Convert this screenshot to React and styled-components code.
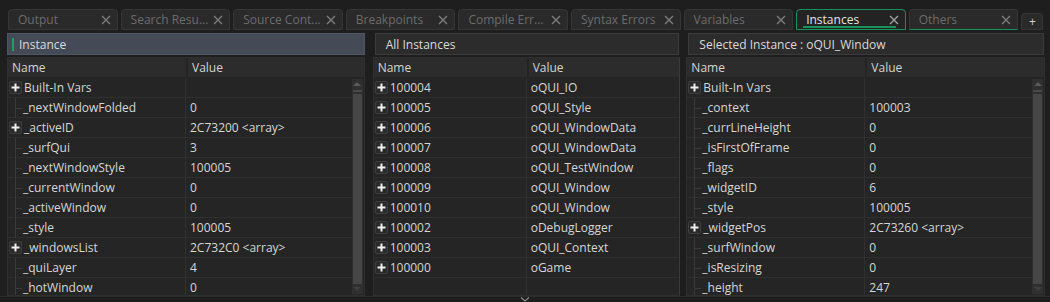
import React from "react";
import styled, { createGlobalStyle } from "styled-components";

const Global = createGlobalStyle`
  html, body { margin: 0; padding: 0; background: #1e1e1e; }
  body { font-family: "Open Sans", "DejaVu Sans", sans-serif; font-size: 12px; }
`;

const Screen = styled.div`
  width: 1050px;
  height: 302px;
  background: #1e1e1e;
  overflow: hidden;
  display: flex;
  flex-direction: column;
`;

const TabBar = styled.div`
  display: flex;
  align-items: flex-end;
  gap: 3px;
  height: 21px;
  flex-shrink: 0;
  padding: 9px 0 0 8px;
`;

const Tab = styled.div`
  position: relative;
  box-sizing: border-box;
  width: ${(p) => (p.$small ? "22px" : "109.6px")};
  height: ${(p) => (p.$small ? "17px" : "21px")};
  display: flex;
  align-items: center;
  justify-content: ${(p) => (p.$small ? "center" : "space-between")};
  padding: ${(p) => (p.$small ? "0" : "0 6px 0 9px")};
  background: ${(p) => (p.$active ? "#232323" : "#2a2a2a")};
  border: 1px solid ${(p) => (p.$active ? "#17915a" : "#363636")};
  border-bottom-color: ${(p) => (p.$active || p.$green ? "#17915a" : "#363636")};
  border-radius: 4px 4px 0 0;
  color: ${(p) => (p.$active ? "#e2e2e2" : p.$small ? "#d0d0d0" : "#6c6c6c")};
  white-space: nowrap;
  font-size: 12px;
  &::after {
    content: "";
    display: ${(p) => (p.$active ? "block" : "none")};
    position: absolute;
    left: 6px;
    right: 9px;
    bottom: 1px;
    height: 2px;
    background: #17915a;
  }
`;

const Panels = styled.div`
  display: flex;
  padding: 3px 5px 0 7px;
  flex: 1;
  min-height: 0;
`;

const Panel = styled.div`
  width: ${(p) => p.$w}px;
  margin-right: ${(p) => p.$gap || 0}px;
  display: flex;
  flex-direction: column;
  min-height: 0;
`;

const Header = styled.div`
  box-sizing: border-box;
  height: 22px;
  flex-shrink: 0;
  display: flex;
  align-items: center;
  gap: 5px;
  padding-left: ${(p) => (p.$selected ? "4px" : "10px")};
  margin: ${(p) => (p.$selected ? "0" : "0 1px 0 2px")};
  background: ${(p) => (p.$selected ? "#444b57" : "#2c2c2c")};
  border: 1px solid ${(p) => (p.$selected ? "#4f5663" : "#3b3b3b")};
  color: #dadada;
  font-size: 12px;
`;

const Marker = styled.span`
  width: 2px;
  height: 13px;
  background: #16a365;
`;

const Table = styled.div`
  margin-top: 2px;
  flex: 1;
  min-height: 0;
  background: #252525;
  border: 1px solid #2f2f2f;
  border-right-color: ${(p) => (p.$edge ? "#3a3a3a" : "#2f2f2f")};
  display: flex;
  flex-direction: column;
  overflow: hidden;
`;

const ColHead = styled.div`
  display: grid;
  grid-template-columns: ${(p) => p.$name}px 1fr;
  height: 19px;
  flex-shrink: 0;
  background: #2c2c2c;
  border-bottom: 1px solid #242424;
  color: #d4d4d4;
  font-size: 12px;
  span {
    display: flex;
    align-items: center;
    padding-left: 4px;
  }
  span + span {
    border-left: 2px solid #242424;
  }
`;

const Body = styled.div`
  flex: 1;
  display: flex;
  min-height: 0;
`;

const Rows = styled.div`
  flex: 1;
  display: flex;
  flex-direction: column;
  background: linear-gradient(
    to right,
    transparent ${(p) => p.$name - 1}px,
    #303030 ${(p) => p.$name - 1}px,
    #303030 ${(p) => p.$name}px,
    transparent ${(p) => p.$name}px
  );
`;

const Row = styled.div`
  display: grid;
  grid-template-columns: ${(p) => p.$name}px 1fr;
  height: 20px;
  flex-shrink: 0;
  border-bottom: 1px solid #2f2f2f;
  box-sizing: border-box;
  color: #d6d6d6;
  font-size: 12px;
`;

const NameCell = styled.div`
  position: relative;
  display: flex;
  align-items: center;
  padding-left: ${(p) => (p.$child ? "15px" : "1px")};
  white-space: nowrap;
  &::before {
    content: "";
    display: ${(p) => (p.$child ? "block" : "none")};
    position: absolute;
    left: 7px;
    top: 0;
    bottom: -1px;
    width: 1px;
    background: #3a3a3a;
  }
  &::after {
    content: "";
    display: ${(p) => (p.$child ? "block" : "none")};
    position: absolute;
    left: 7px;
    top: 10px;
    width: 7px;
    height: 1px;
    background: #3a3a3a;
  }
`;

const ValueCell = styled.div`
  display: flex;
  align-items: center;
  padding-left: 4px;
  white-space: nowrap;
`;

const PlusBox = styled.span`
  box-sizing: border-box;
  width: 13px;
  height: 13px;
  margin-right: 2px;
  border: 1px solid #3e3e3e;
  border-radius: 2px;
  background: #2a2a2a;
  display: flex;
  align-items: center;
  justify-content: center;
`;

const Scroll = styled.div`
  width: 11px;
  margin: 1px 1px 1px 0;
  background: #2f2f2f;
  display: flex;
  flex-direction: column;
  align-items: center;
`;

const Arrow = styled.div`
  width: 0;
  height: 0;
  margin: 3px 0;
  border-left: 4px solid transparent;
  border-right: 4px solid transparent;
  ${(p) => (p.$down ? "border-top: 4px solid #3f3f3f;" : "border-bottom: 4px solid #5a5a5a;")}
`;

const Thumb = styled.div`
  width: 9px;
  flex: 1;
  margin-top: 1px;
  background: linear-gradient(#4a4a4a 0 2px, #2f2f2f 2px 4px, #464646 4px);
`;

const Footer = styled.div`
  height: 5px;
  flex-shrink: 0;
  border-top: 1px solid #2c2c2c;
  display: flex;
  justify-content: center;
`;

const Plus = () => (
  <PlusBox>
    <svg width="9" height="9" viewBox="0 0 9 9">
      <rect x="3.5" y="0.5" width="2" height="8" fill="#f0f0f0" />
      <rect x="0.5" y="3.5" width="8" height="2" fill="#f0f0f0" />
    </svg>
  </PlusBox>
);

const CloseIcon = ({ active }) => (
  <svg width="10" height="10" viewBox="0 0 10 10">
    <path
      d="M1 1 L9 9 M9 1 L1 9"
      stroke={active ? "#a0a0a0" : "#7c7c7c"}
      strokeWidth="1.4"
      fill="none"
    />
  </svg>
);

const tabs = [
  "Output",
  "Search Resu...",
  "Source Cont...",
  "Breakpoints",
  "Compile Err...",
  "Syntax Errors",
  "Variables",
  "Instances",
  "Others",
];

const leftRows = [
  ["Built-In Vars", "", true],
  ["_nextWindowFolded", "0"],
  ["_activeID", "2C73200 <array>", true],
  ["_surfQui", "3"],
  ["_nextWindowStyle", "100005"],
  ["_currentWindow", "0"],
  ["_activeWindow", "0"],
  ["_style", "100005"],
  ["_windowsList", "2C732C0 <array>", true],
  ["_quiLayer", "4"],
  ["_hotWindow", "0"],
];

const midRows = [
  ["100004", "oQUI_IO"],
  ["100005", "oQUI_Style"],
  ["100006", "oQUI_WindowData"],
  ["100007", "oQUI_WindowData"],
  ["100008", "oQUI_TestWindow"],
  ["100009", "oQUI_Window"],
  ["100010", "oQUI_Window"],
  ["100002", "oDebugLogger"],
  ["100003", "oQUI_Context"],
  ["100000", "oGame"],
].map(([a, b]) => [a, b, true]);

const rightRows = [
  ["Built-In Vars", "", true],
  ["_context", "100003"],
  ["_currLineHeight", "0"],
  ["_isFirstOfFrame", "0"],
  ["_flags", "0"],
  ["_widgetID", "6"],
  ["_style", "100005"],
  ["_widgetPos", "2C73260 <array>", true],
  ["_surfWindow", "0"],
  ["_isResizing", "0"],
  ["_height", "247"],
];

function VarTable({ rows, name, scroll, edge }) {
  return (
    <Table $edge={edge}>
      <ColHead $name={name}>
        <span>Name</span>
        <span>Value</span>
      </ColHead>
      <Body>
        <Rows $name={name}>
          {rows.map(([n, v, exp], i) => (
            <Row key={i} $name={name}>
              <NameCell $child={!exp}>
                {exp && <Plus />}
                {n}
              </NameCell>
              <ValueCell>{v}</ValueCell>
            </Row>
          ))}
        </Rows>
        {scroll && (
          <Scroll>
            <Arrow />
            <Thumb />
            <Arrow $down />
          </Scroll>
        )}
      </Body>
    </Table>
  );
}

export default function App() {
  return (
    <Screen>
      <Global />
      <TabBar>
        {tabs.map((t) => (
          <Tab key={t} $active={t === "Instances"} $green={t === "Others"}>
            {t}
            <CloseIcon active={t === "Instances"} />
          </Tab>
        ))}
        <Tab $small>+</Tab>
      </TabBar>
      <Panels>
        <Panel $w={358} $gap={8}>
          <Header $selected>
            <Marker />
            Instance
          </Header>
          <VarTable rows={leftRows} name={178} scroll />
        </Panel>
        <Panel $w={308} $gap={6}>
          <Header>All Instances</Header>
          <VarTable rows={midRows} name={153} edge />
        </Panel>
        <Panel $w={359}>
          <Header>Selected Instance : oQUI_Window</Header>
          <VarTable rows={rightRows} name={178} scroll />
        </Panel>
      </Panels>
      <Footer>
        <svg width="10" height="5" viewBox="0 0 10 5">
          <path d="M1 0.5 L5 4 L9 0.5" stroke="#8a8a8a" strokeWidth="1.2" fill="none" />
        </svg>
      </Footer>
    </Screen>
  );
}
